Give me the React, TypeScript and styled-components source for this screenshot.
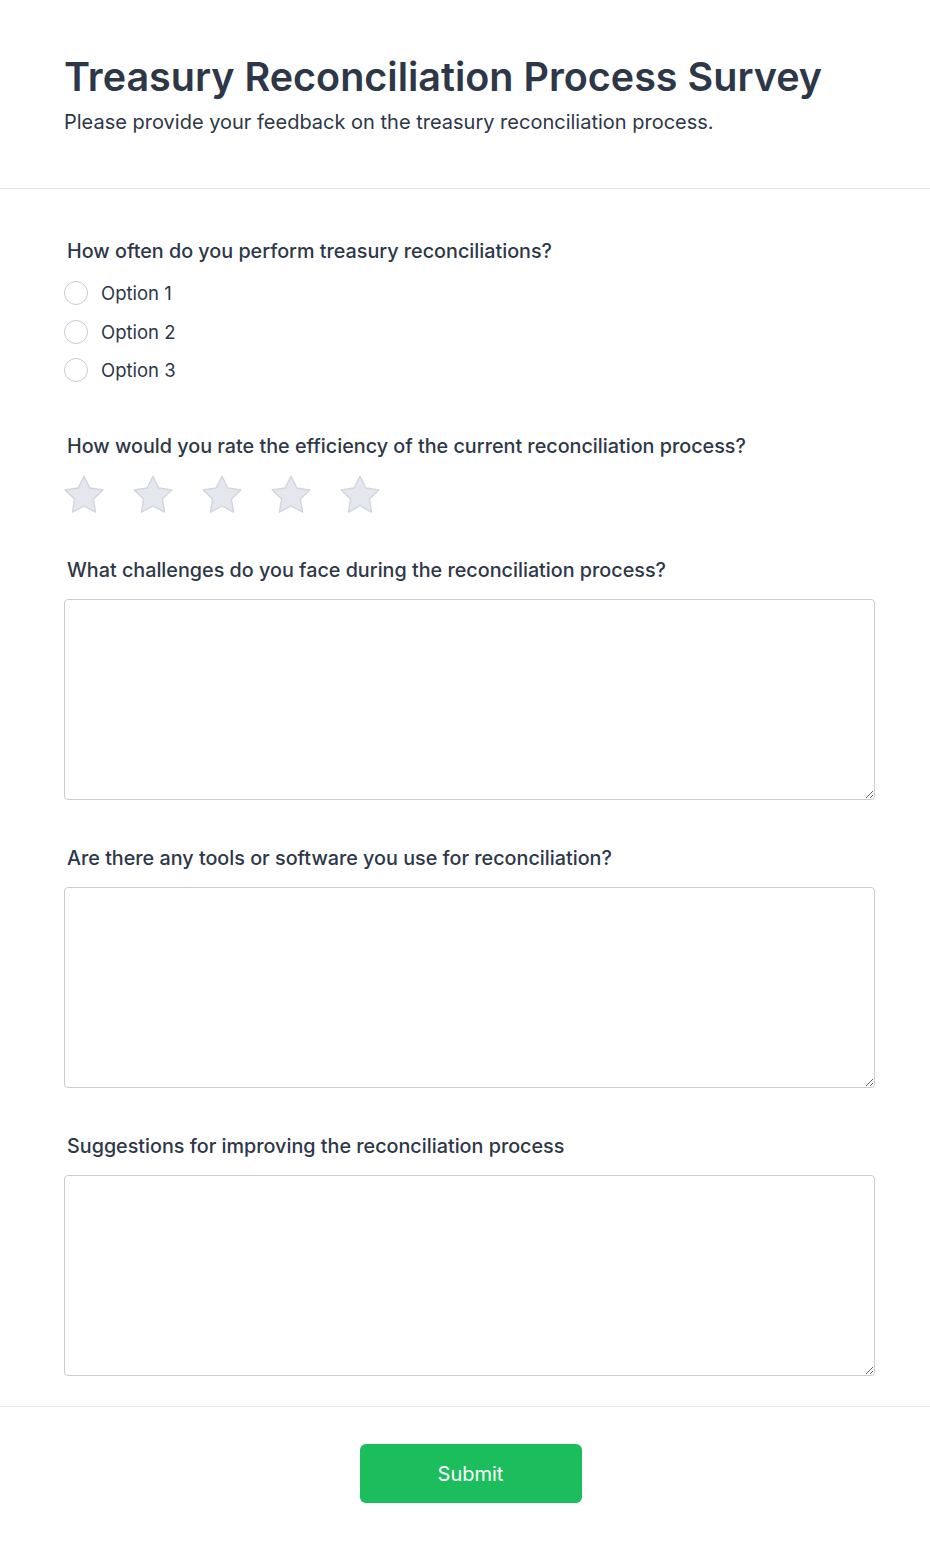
import React, { useState } from "react";
import styled, { createGlobalStyle } from "styled-components";

const GlobalStyle = createGlobalStyle`
  * { box-sizing: border-box; }
  body {
    margin: 0;
    background: #ffffff;
    font-family: Inter, "Noto Sans", sans-serif;
    color: #2d3748;
  }
`;

const Page = styled.div`
  width: 930px;
  display: flex;
  flex-direction: column;
`;

const Header = styled.header`
  padding: 55px 40px 52px 64px;
  border-bottom: 1px solid #e2e4ec;
`;

const Title = styled.h1`
  margin: 0;
  font-size: 39.5px;
  line-height: 44px;
  font-weight: 600;
  color: #2d3748;
`;

const Subtitle = styled.p`
  margin: 9px 0 0;
  font-size: 20px;
  line-height: 28px;
  color: #2d3748;
`;

const Body = styled.div`
  padding: 50px 55px 30px 64px;
  display: flex;
  flex-direction: column;
  gap: 46px;
  border-bottom: 1px solid #e8eaf2;
`;

const Field = styled.div<{ $extra?: number }>`
  display: flex;
  flex-direction: column;
  gap: 17px;
  margin-bottom: ${(p) => p.$extra ?? 0}px;
`;

const Label = styled.label`
  padding-left: 3px;
  font-size: 19.75px;
  line-height: 24px;
  font-weight: 500;
  color: #2d3748;
`;

const Options = styled.div`
  display: flex;
  flex-direction: column;
  gap: 14.5px;
  margin-top: 1px;
`;

const OptionRow = styled.label`
  display: flex;
  align-items: center;
  gap: 13px;
  height: 24px;
  font-size: 18.5px;
  color: #2d3748;
  cursor: pointer;
`;

const Radio = styled.span<{ $on: boolean }>`
  width: 24px;
  height: 24px;
  border-radius: 50%;
  border: 1px solid #c5cad3;
  background: #fff;
  box-shadow: ${(p) => (p.$on ? "inset 0 0 0 6px #22c55e" : "none")};
`;

const Stars = styled.div`
  display: flex;
  gap: 29px;
  height: 40px;
`;

const StarButton = styled.button`
  display: block;
  width: 40px;
  height: 40px;
  padding: 0;
  border: none;
  background: none;
  cursor: pointer;

  svg {
    display: block;
  }
`;

const TextArea = styled.textarea`
  width: 100%;
  height: 201px;
  border: 1px solid #c9ccd4;
  border-radius: 4px;
  padding: 10px 12px;
  font-family: inherit;
  font-size: 16px;
  color: #2d3748;
  resize: vertical;
  outline: none;
`;

const Footer = styled.footer`
  display: flex;
  justify-content: center;
  padding: 37px 0 50px;
`;

const SubmitButton = styled.button`
  width: 222px;
  height: 59px;
  margin-left: 11px;
  border: none;
  border-radius: 6px;
  background: #1bbd5c;
  color: #ffffff;
  font-family: inherit;
  font-size: 20px;
  font-weight: 400;
  cursor: pointer;
`;

function Star({ on }: { on: boolean }) {
  return (
    <svg width="40" height="40" viewBox="2 2 20 20">
      <path
        d="M12 2.6l2.9 5.9 6.5.95-4.7 4.6 1.1 6.5L12 17.5l-5.8 3.05 1.1-6.5-4.7-4.6 6.5-.95z"
        fill={on ? "#facc15" : "#e5e7ef"}
        stroke={on ? "#eab308" : "#d1d5de"}
        strokeWidth="0.7"
        strokeLinejoin="round"
      />
    </svg>
  );
}

function App() {
  const [choice, setChoice] = useState<number | null>(null);
  const [rating, setRating] = useState(0);

  return (
    <Page>
      <GlobalStyle />
      <Header>
        <Title>Treasury Reconciliation Process Survey</Title>
        <Subtitle>Please provide your feedback on the treasury reconciliation process.</Subtitle>
      </Header>
      <Body>
        <Field $extra={6}>
          <Label>How often do you perform treasury reconciliations?</Label>
          <Options>
            {[1, 2, 3].map((n) => (
              <OptionRow key={n} onClick={() => setChoice(n)}>
                <Radio $on={choice === n} />
                Option {n}
              </OptionRow>
            ))}
          </Options>
        </Field>
        <Field $extra={-3}>
          <Label>How would you rate the efficiency of the current reconciliation process?</Label>
          <Stars>
            {[1, 2, 3, 4, 5].map((n) => (
              <StarButton key={n} onClick={() => setRating(n)}>
                <Star on={n <= rating} />
              </StarButton>
            ))}
          </Stars>
        </Field>
        <Field>
          <Label>What challenges do you face during the reconciliation process?</Label>
          <TextArea />
        </Field>
        <Field>
          <Label>Are there any tools or software you use for reconciliation?</Label>
          <TextArea />
        </Field>
        <Field>
          <Label>Suggestions for improving the reconciliation process</Label>
          <TextArea />
        </Field>
      </Body>
      <Footer>
        <SubmitButton>Submit</SubmitButton>
      </Footer>
    </Page>
  );
}

export default App;
